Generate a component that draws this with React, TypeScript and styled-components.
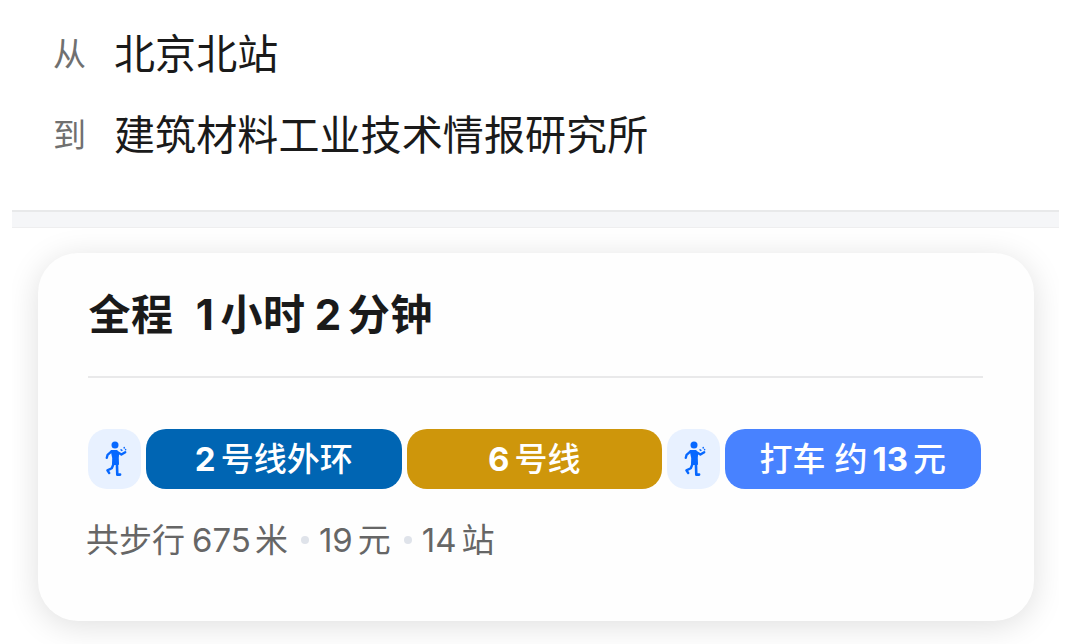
import type { ReactNode } from 'react';
import styled, { createGlobalStyle } from 'styled-components';

const GlobalStyle = createGlobalStyle`
  body {
    margin: 0;
    background: #fff;
    font-family: Inter, 'Noto Sans CJK SC', sans-serif;
    color: #1a1a1a;
  }
`;

const Page = styled.main`
  height: 644px;
  margin: 0 21px 0 12px;
  overflow: hidden;
  display: flex;
  flex-direction: column;
`;

const Places = styled.section`
  height: 210px;
  box-sizing: border-box;
  padding: 13px 0 0 41px;
  display: flex;
  flex-direction: column;
  flex-shrink: 0;
`;

const PlaceRow = styled.div`
  display: flex;
  align-items: center;
  height: 81px;
`;

const PlaceLabel = styled.span`
  width: 61px;
  font-size: 33px;
  line-height: 40px;
  color: #707070;
`;

const PlaceName = styled.span`
  font-size: 41px;
  line-height: 60px;
  letter-spacing: 0.1px;
  white-space: nowrap;
`;

const Divider = styled.div`
  height: 18px;
  box-sizing: border-box;
  flex-shrink: 0;
  background: #f5f6f8;
  border-top: 2px solid #e8e9ea;
  border-bottom: 1px solid #eeeeef;
`;

const CardArea = styled.section`
  flex: 1;
  overflow: hidden;
  padding: 25px 25px 0 26px;
`;

const Card = styled.article`
  height: 367.5px;
  box-sizing: border-box;
  padding: 32px 51px 0 50px;
  border-radius: 40px;
  background: #fefefe;
  box-shadow: 0 5px 32px rgba(0, 0, 0, 0.13);
`;

const Title = styled.h1`
  height: 93px;
  box-sizing: border-box;
  margin: 0;
  border-bottom: 2px solid #e9e9ea;
  font-size: 42px;
  line-height: 60px;
  font-weight: 700;
  letter-spacing: 0.6px;
  text-indent: 0.5px;
  white-space: nowrap;
`;

const Num = styled.span<{ $before?: number; $after?: number }>`
  margin-left: ${({ $before = 0 }) => $before}px;
  margin-right: ${({ $after = 0 }) => $after}px;
`;

const Segments = styled.div`
  display: flex;
  gap: 5px;
  margin-top: 51px;
`;

const Segment = styled.div<{ $color: string }>`
  flex: none;
  width: 255.5px;
  height: 60px;
  border-radius: 20px;
  background: ${({ $color }) => $color};
  color: #fff;
  font-size: 33px;
  line-height: 60px;
  font-weight: 500;
  text-align: center;
  white-space: nowrap;

  ${Num} {
    font-weight: 650;
  }
`;

const Approx = styled.span`
  margin-left: 9px;
`;

const WalkBadge = styled.div`
  flex: none;
  width: 53px;
  height: 60px;
  border-radius: 19px;
  background: #e8f1ff;

  svg {
    display: block;
  }
`;

const Summary = styled.p`
  display: flex;
  align-items: center;
  margin: 27px 0 0 -2px;
  font-size: 33px;
  line-height: 48px;
  color: #666;
  white-space: nowrap;
`;

const Dot = styled.i`
  width: 8px;
  height: 8px;
  margin: 0 10px 0 13px;
  border-radius: 50%;
  background: #dfe3ea;
`;

function WalkIcon() {
  return (
    <WalkBadge>
      <svg width="53" height="60" viewBox="0 0 53 60" fill="none" stroke="#0768ff" strokeLinecap="round" strokeLinejoin="round">
        <circle cx="27" cy="16" r="3.5" fill="#0768ff" stroke="none" />
        <path d="M23.6 21.8h5l1.6 2.8-.3 4.4.2 6h-5.2l.2-6z" fill="#0768ff" strokeWidth="1.8" />
        <path d="M23.8 22.2l-4.2 3.6-.8 3" strokeWidth="2.4" />
        <path d="M29.2 23l4.2 2.6 3.8-2.4" strokeWidth="2.4" />
        <path d="M28.9 34l.4 11.6h2.8" strokeWidth="2.6" />
        <path d="M25.9 34l-2.1 5.2-4.4 2.2 1.8 2.6" strokeWidth="2.4" />
        <path d="M33.1 20.8l.8.6M36.2 18.6v.4M37.6 20.6v.1" strokeWidth="1.5" />
      </svg>
    </WalkBadge>
  );
}

function Place({ label, children }: { label: string; children: ReactNode }) {
  return (
    <PlaceRow>
      <PlaceLabel>{label}</PlaceLabel>
      <PlaceName>{children}</PlaceName>
    </PlaceRow>
  );
}

export default function App() {
  return (
    <>
      <GlobalStyle />
      <Page>
        <Places>
          <Place label="从">北京北站</Place>
          <Place label="到">建筑材料工业技术情报研究所</Place>
        </Places>
        <Divider />
        <CardArea>
          <Card>
            <Title>
              全程<Num $before={22} $after={6}>1</Num>小时<Num $before={9} $after={6}>2</Num>分钟
            </Title>
            <Segments>
              <WalkIcon />
              <Segment $color="#0065b3">
                <Num $after={5}>2</Num>号线外环
              </Segment>
              <Segment $color="#ce960b">
                <Num $after={5}>6</Num>号线
              </Segment>
              <WalkIcon />
              <Segment $color="#4882ff">
                打车<Approx>约</Approx>
                <Num $before={5} $after={5}>13</Num>元
              </Segment>
            </Segments>
            <Summary>
              共步行<Num $before={7} $after={4}>675</Num>米
              <Dot />
              <Num $after={5}>19</Num>元
              <Dot />
              <Num $after={5}>14</Num>站
            </Summary>
          </Card>
        </CardArea>
      </Page>
    </>
  );
}
